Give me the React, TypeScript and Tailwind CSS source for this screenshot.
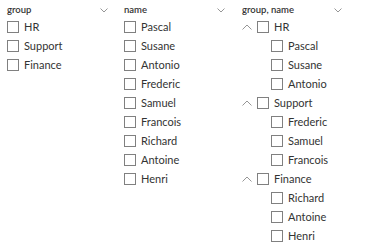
const groups = [
  { name: "HR", items: ["Pascal", "Susane", "Antonio"] },
  { name: "Support", items: ["Frederic", "Samuel", "Francois"] },
  { name: "Finance", items: ["Richard", "Antoine", "Henri"] },
];

const font = { fontFamily: '"Segoe UI", Lato, "Open Sans", sans-serif' };

function ChevronDown() {
  return (
    <svg width="8" height="5" viewBox="0 0 8 5" className="shrink-0">
      <path d="M0.5 0.5 L4 4 L7.5 0.5" fill="none" stroke="#8a8a8a" strokeWidth="0.9" />
    </svg>
  );
}

function ChevronUp() {
  return (
    <svg width="10" height="6" viewBox="0 0 10 6" className="shrink-0">
      <path d="M0.5 5.5 L5 1 L9.5 5.5" fill="none" stroke="#8a8a8a" strokeWidth="0.9" />
    </svg>
  );
}

function Box() {
  return <span className="w-[12px] h-[12px] border border-[#808080] bg-white shrink-0" />;
}

function Item({ label, className = "" }: { label: string; className?: string }) {
  return (
    <div className={`flex items-center h-[19px] gap-[5px] ${className}`}>
      <Box />
      <span className="text-[11px] text-[#333] leading-none">{label}</span>
    </div>
  );
}

function Header({ title, width }: { title: string; width: string }) {
  return (
    <div className={`flex items-center justify-between h-[16px] pt-[2px] ${width}`}>
      <span className="text-[9.5px] font-semibold text-[#333] leading-none">{title}</span>
      <ChevronDown />
    </div>
  );
}

export default function App() {
  const names = groups.flatMap((g) => g.items);
  return (
    <div className="w-[380px] h-[247px] bg-white flex overflow-hidden" style={font}>
      <div className="w-[117px] pl-[7px] pt-[1px]">
        <Header title="group" width="w-[101px]" />
        {groups.map((g) => (
          <Item key={g.name} label={g.name} />
        ))}
      </div>
      <div className="w-[119px] pl-[7px] pt-[1px]">
        <Header title="name" width="w-[101px]" />
        {names.map((n) => (
          <Item key={n} label={n} />
        ))}
      </div>
      <div className="flex-1 pl-[6px] pt-[1px]">
        <Header title="group, name" width="w-[100px]" />
        {groups.map((g) => (
          <div key={g.name}>
            <div className="flex items-center h-[19px]">
              <span className="w-[15px] flex items-center">
                <ChevronUp />
              </span>
              <Item label={g.name} />
            </div>
            {g.items.map((n) => (
              <Item key={n} label={n} className="pl-[29px]" />
            ))}
          </div>
        ))}
      </div>
    </div>
  );
}
